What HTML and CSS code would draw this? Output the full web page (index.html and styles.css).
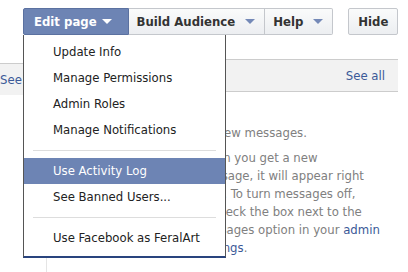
FILE: index.html
```html
<!DOCTYPE html>
<html lang="en">
<head>
  <meta charset="UTF-8" />
  <title>Edit page</title>
  <link rel="stylesheet" href="styles.css">
</head>
<body>

  <!-- Top toolbar -->
  <div class="toolbar">
    <div class="btn-group">
      <button class="btn btn-active">Edit page <span class="caret"></span></button>
      <button class="btn">Build Audience <span class="caret"></span></button>
      <button class="btn">Help <span class="caret"></span></button>
    </div>
    <button class="btn btn-hide">Hide</button>
  </div>

  <!-- Page content behind the menu -->
  <div class="page">
    <div class="left-col">
      <div class="band band-left"><a href="#">See All</a></div>
    </div>
    <div class="right-col">
      <div class="band band-right"><a href="#">See all</a></div>
      <div class="messages">
        <p class="empty">No new messages.</p>
        <p class="help">When you get a new<br>message, it will appear right<br>here. To turn messages off,<br>uncheck the box next to the<br>Messages option in your <a href="#">admin<br>settings</a>.</p>
      </div>
    </div>
  </div>

  <!-- Open dropdown -->
  <ul class="menu">
    <li>Update Info</li>
    <li>Manage Permissions</li>
    <li>Admin Roles</li>
    <li>Manage Notifications</li>
    <li class="sep"></li>
    <li class="selected">Use Activity Log</li>
    <li>See Banned Users...</li>
    <li class="sep"></li>
    <li>Use Facebook as FeralArt</li>
  </ul>

</body>
</html>
```

FILE: styles.css
```css
body {
  margin: 0;
  width: 408px;
  height: 272px;
  overflow: hidden;
  position: relative;
  background-color: #fff;
  font-family: "DejaVu Sans Condensed", "DejaVu Sans", sans-serif;
  font-size: 13px;
  color: #333;
}
a {
  color: #3b5998;
  text-decoration: none;
}
.toolbar {
  display: flex;
  padding: 8px 0 0 23px;
}
.btn-group {
  display: flex;
}
.btn {
  height: 27px;
  padding: 0 9px 0 8px;
  border: 1px solid #c4c7cc;
  border-left-width: 0;
  background: linear-gradient(#fafbfb, #eceef1);
  font-family: inherit;
  font-size: 13px;
  font-weight: bold;
  color: #333;
  display: flex;
  align-items: center;
}
.btn-group .btn:first-child {
  border-left-width: 1px;
  border-radius: 2px 0 0 2px;
}
.btn-group .btn:last-child {
  border-radius: 0 2px 2px 0;
}
.btn-active {
  background: #6d84b4;
  border-color: #5b71a0;
  color: #fff;
  padding: 0 16px 0 10px;
}
.caret {
  display: inline-block;
  width: 0;
  height: 0;
  margin-left: 10px;
  border-left: 5px solid transparent;
  border-right: 5px solid transparent;
  border-top: 5px solid #7489b7;
}
.btn-active .caret {
  margin-left: 5px;
  border-top-color: #fff;
}
.btn-hide {
  margin-left: 15px;
  padding: 0 9px;
  border-left-width: 1px;
  border-radius: 2px;
}

.page {
  display: flex;
  height: 237px;
}
.left-col {
  width: 46px;
  border-right: 1px solid #e5e5e5;
}
.band {
  background-color: #f2f2f2;
  border-top: 1px solid #ccc;
  border-bottom: 1px solid #ccc;
  height: 31px;
  line-height: 31px;
  white-space: nowrap;
  overflow: hidden;
}
.band-left {
  margin-top: 28px;
  border-bottom: none;
}
.right-col {
  flex: 1;
  margin-right: 10px;
}
.band-right {
  margin-top: 24px;
  text-align: right;
  padding-right: 13px;
}
.messages {
  padding-left: 150px;
  color: #808080;
  line-height: 18px;
}
.messages p {
  margin: 0;
}
.empty {
  padding-top: 32px;
}
.help {
  padding-top: 7px;
}

.menu {
  position: absolute;
  left: 23px;
  top: 35px;
  width: 201px;
  margin: 0;
  padding: 4px 0 5px;
  list-style: none;
  background-color: #fff;
  border: 1px solid #555;
  border-top: none;
  border-bottom: 2px solid #29447e;
}
.menu li {
  height: 26px;
  line-height: 26px;
  padding-left: 29px;
  color: #222;
  white-space: nowrap;
}
.menu li.sep {
  height: 1px;
  margin: 7px 9px;
  padding: 0;
  background-color: #ddd;
}
.menu li.selected {
  background-color: #6d84b4;
  color: #fff;
}
```
